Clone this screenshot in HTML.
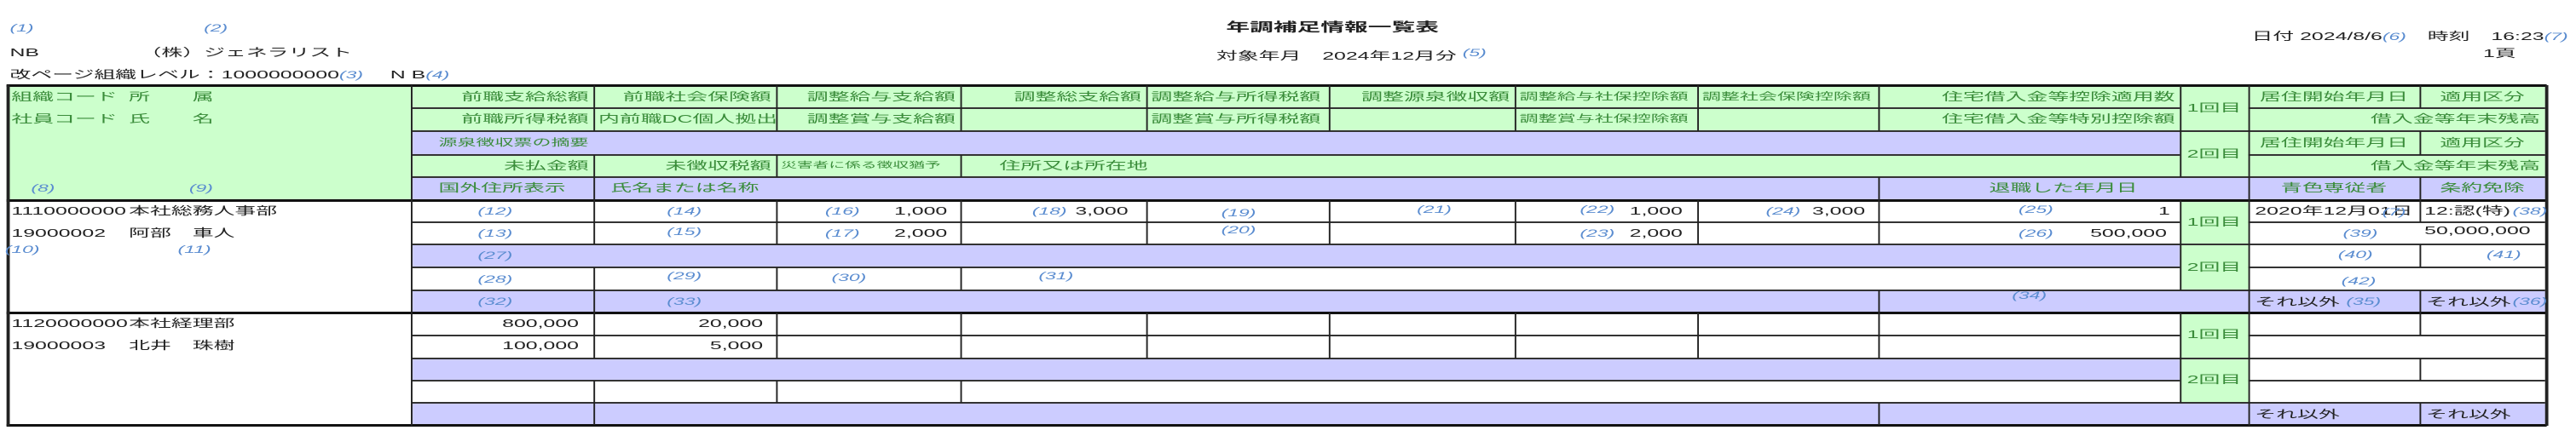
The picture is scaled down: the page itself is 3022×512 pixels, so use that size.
<!DOCTYPE html>
<html><head><meta charset="utf-8"><style>
html,body{margin:0;padding:0;background:#fff;}
body{width:3022px;height:512px;overflow:hidden;position:relative;}
.p{position:absolute;left:0;top:0;width:1580px;height:512px;transform:scaleX(1.9127);transform-origin:0 0;font-family:"Liberation Sans","Noto Sans CJK JP",sans-serif;font-size:13px;color:#222;}
.p div{position:absolute;}
.h{height:2px;background:#333;}
.H{height:3px;background:#111;}
.v{width:1px;background:#222;}
.c{height:26px;line-height:26px;white-space:nowrap;box-sizing:border-box;padding:0 3px;}
.r{text-align:right;}
.m{text-align:center;}
.g{color:#3a8c3a;}
.s{font-size:11.5px;}
.xs{font-size:9.8px;}
.b{color:#5a8cd0;font-style:italic;font-size:12px;}
.G{background:#ccffcc;}
.P{background:#ccccff;}
</style></head><body><div class="p">

<div class="c b" style="left:3px;top:20px">(1)</div>
<div class="c b" style="left:122px;top:20px">(2)</div>
<div class="c" style="left:3px;top:49px">NB</div>
<div class="c" style="left:83px;top:49px">（株）ジェネラリスト</div>
<div class="c" style="left:3px;top:75px">改ページ組織レベル：1000000000<span class="b">(3)</span>　 N B<span class="b">(4)</span></div>
<div class="c" style="left:749px;top:20px;font-size:14.5px;font-weight:bold">年調補足情報一覧表</div>
<div class="c" style="left:743px;top:49px">対象年月　2024年12月分 <span class="b" style="vertical-align:4px">(5)</span></div>
<div class="c" style="left:1378px;top:30px">日付 2024/8/6<span class="b">(6)</span>　時刻　16:23<span class="b">(7)</span></div>
<div class="c" style="left:1520px;top:50px">1頁</div>

<div class="G" style="left:4px;top:100px;width:1557px;height:135px"></div>
<div class="P" style="left:252px;top:154px;width:1085px;height:28px"></div>
<div class="P" style="left:252px;top:208px;width:1309px;height:27px"></div>
<div class="P" style="left:252px;top:287px;width:1085px;height:27px"></div>
<div class="P" style="left:252px;top:341px;width:1309px;height:26px"></div>
<div class="G" style="left:1337px;top:235px;width:42px;height:106px"></div>
<div class="P" style="left:252px;top:421px;width:1085px;height:26px"></div>
<div class="P" style="left:252px;top:473px;width:1309px;height:26px"></div>
<div class="G" style="left:1337px;top:367px;width:42px;height:106px"></div>

<div class="h" style="left:252px;top:126px;width:1085px"></div><div class="h" style="left:1379px;top:126px;width:182px"></div>
<div class="h" style="left:252px;top:181px;width:1085px"></div><div class="h" style="left:1379px;top:181px;width:182px"></div>
<div class="h" style="left:252px;top:260px;width:1085px"></div><div class="h" style="left:1379px;top:260px;width:182px"></div>
<div class="h" style="left:252px;top:313px;width:1085px"></div><div class="h" style="left:1379px;top:313px;width:182px"></div>
<div class="h" style="left:252px;top:393px;width:1085px"></div><div class="h" style="left:1379px;top:393px;width:182px"></div>
<div class="h" style="left:252px;top:446px;width:1085px"></div><div class="h" style="left:1379px;top:446px;width:182px"></div>
<div class="h" style="left:252px;top:153px;width:1309px"></div>
<div class="h" style="left:252px;top:207px;width:1309px"></div>
<div class="h" style="left:252px;top:286px;width:1309px"></div>
<div class="h" style="left:252px;top:340px;width:1309px"></div>
<div class="h" style="left:252px;top:420px;width:1309px"></div>
<div class="h" style="left:252px;top:472px;width:1309px"></div>
<div class="H" style="left:4px;top:99px;width:1558px"></div>
<div class="H" style="left:4px;top:234px;width:1558px"></div>
<div class="H" style="left:4px;top:366px;width:1558px"></div>
<div class="H" style="left:4px;top:498px;width:1558px"></div>

<div class="v" style="left:4px;top:100px;height:400px;width:2px"></div>
<div class="v" style="left:252px;top:100px;height:400px"></div>
<div class="v" style="left:1561px;top:100px;height:400px;width:2px"></div>
<div class="v" style="left:1379px;top:100px;height:400px"></div>
<div class="v" style="left:364px;top:100px;height:54px"></div>
<div class="v" style="left:364px;top:182px;height:105px"></div>
<div class="v" style="left:364px;top:314px;height:107px"></div>
<div class="v" style="left:364px;top:447px;height:52px"></div>
<div class="v" style="left:476px;top:100px;height:54px"></div><div class="v" style="left:476px;top:182px;height:26px"></div><div class="v" style="left:476px;top:235px;height:52px"></div><div class="v" style="left:476px;top:314px;height:27px"></div><div class="v" style="left:476px;top:367px;height:54px"></div><div class="v" style="left:476px;top:447px;height:26px"></div>
<div class="v" style="left:589px;top:100px;height:54px"></div><div class="v" style="left:589px;top:182px;height:26px"></div><div class="v" style="left:589px;top:235px;height:52px"></div><div class="v" style="left:589px;top:314px;height:27px"></div><div class="v" style="left:589px;top:367px;height:54px"></div><div class="v" style="left:589px;top:447px;height:26px"></div>
<div class="v" style="left:703px;top:100px;height:54px"></div><div class="v" style="left:703px;top:235px;height:52px"></div><div class="v" style="left:703px;top:367px;height:54px"></div>
<div class="v" style="left:815px;top:100px;height:54px"></div><div class="v" style="left:815px;top:235px;height:52px"></div><div class="v" style="left:815px;top:367px;height:54px"></div>
<div class="v" style="left:929px;top:100px;height:54px"></div><div class="v" style="left:929px;top:235px;height:52px"></div><div class="v" style="left:929px;top:367px;height:54px"></div>
<div class="v" style="left:1041px;top:100px;height:54px"></div><div class="v" style="left:1041px;top:235px;height:52px"></div><div class="v" style="left:1041px;top:367px;height:54px"></div>
<div class="v" style="left:1152px;top:100px;height:54px"></div><div class="v" style="left:1152px;top:208px;height:79px"></div><div class="v" style="left:1152px;top:341px;height:80px"></div><div class="v" style="left:1152px;top:473px;height:26px"></div>
<div class="v" style="left:1337px;top:100px;height:108px"></div><div class="v" style="left:1337px;top:235px;height:106px"></div><div class="v" style="left:1337px;top:367px;height:106px"></div>
<div class="v" style="left:1484px;top:100px;height:27px"></div><div class="v" style="left:1484px;top:154px;height:28px"></div><div class="v" style="left:1484px;top:208px;height:53px"></div><div class="v" style="left:1484px;top:287px;height:27px"></div><div class="v" style="left:1484px;top:341px;height:53px"></div><div class="v" style="left:1484px;top:421px;height:26px"></div><div class="v" style="left:1484px;top:473px;height:26px"></div>

<div class="c g" style="left:4px;top:101px">組織コード</div><div class="c g" style="left:76px;top:101px">所</div><div class="c g" style="left:115px;top:101px">属</div>
<div class="c g" style="left:4px;top:127px">社員コード</div><div class="c g" style="left:76px;top:127px">氏</div><div class="c g" style="left:115px;top:127px">名</div>
<div class="c b" style="left:16px;top:208px">(8)</div><div class="c b" style="left:113px;top:208px">(9)</div>

<div class="c g r" style="left:252px;top:101px;width:112px">前職支給総額</div>
<div class="c g r" style="left:364px;top:101px;width:112px">前職社会保険額</div>
<div class="c g r" style="left:476px;top:101px;width:113px">調整給与支給額</div>
<div class="c g r" style="left:589px;top:101px;width:114px">調整総支給額</div>
<div class="c g" style="left:703px;top:101px;width:112px">調整給与所得税額</div>
<div class="c g r" style="left:815px;top:101px;width:114px">調整源泉徴収額</div>
<div class="c g s" style="left:929px;top:101px;width:112px">調整給与社保控除額</div>
<div class="c g s" style="left:1041px;top:101px;width:111px">調整社会保険控除額</div>
<div class="c g r" style="left:1152px;top:101px;width:185px">住宅借入金等控除適用数</div>
<div class="c g m" style="left:1337px;top:114px;width:42px">1回目</div>
<div class="c g m" style="left:1379px;top:101px;width:105px">居住開始年月日</div>
<div class="c g m" style="left:1484px;top:101px;width:77px">適用区分</div>

<div class="c g r" style="left:252px;top:127px;width:112px">前職所得税額</div>
<div class="c g r" style="left:364px;top:127px;width:112px">内前職DC個人拠出</div>
<div class="c g r" style="left:476px;top:127px;width:113px">調整賞与支給額</div>
<div class="c g" style="left:703px;top:127px;width:112px">調整賞与所得税額</div>
<div class="c g s" style="left:929px;top:127px;width:112px">調整賞与社保控除額</div>
<div class="c g r" style="left:1152px;top:127px;width:185px">住宅借入金等特別控除額</div>
<div class="c g r" style="left:1379px;top:127px;width:182px">借入金等年末残高</div>

<div class="c g s" style="left:266px;top:155px">源泉徴収票の摘要</div>
<div class="c g m" style="left:1337px;top:168px;width:42px">2回目</div>
<div class="c g m" style="left:1379px;top:155px;width:105px">居住開始年月日</div>
<div class="c g m" style="left:1484px;top:155px;width:77px">適用区分</div>

<div class="c g r" style="left:252px;top:182px;width:112px">未払金額</div>
<div class="c g r" style="left:364px;top:182px;width:112px">未徴収税額</div>
<div class="c g xs" style="left:476px;top:182px;width:113px">災害者に係る徴収猶予</div>
<div class="c g" style="left:610px;top:182px">住所又は所在地</div>
<div class="c g r" style="left:1379px;top:182px;width:182px">借入金等年末残高</div>

<div class="c g m" style="left:252px;top:208px;width:112px">国外住所表示</div>
<div class="c g m" style="left:364px;top:208px;width:112px">氏名または名称</div>
<div class="c g m" style="left:1152px;top:208px;width:227px">退職した年月日</div>
<div class="c g m" style="left:1379px;top:208px;width:105px">青色専従者</div>
<div class="c g m" style="left:1484px;top:208px;width:77px">条約免除</div>

<div class="c" style="left:4px;top:235px">1110000000</div><div class="c" style="left:76px;top:235px">本社総務人事部</div>
<div class="c" style="left:4px;top:261px">19000002</div><div class="c" style="left:76px;top:261px">阿部　車人</div>
<div class="c b" style="left:0px;top:280px">(10)</div><div class="c b" style="left:106px;top:280px">(11)</div>

<div class="c b" style="left:290px;top:235px">(12)</div>
<div class="c b" style="left:406px;top:235px">(14)</div>
<div class="c b" style="left:503px;top:235px">(16)</div><div class="c r" style="left:476px;top:235px;width:108px">1,000</div>
<div class="c b" style="left:630px;top:235px">(18)</div><div class="c r" style="left:589px;top:235px;width:106px">3,000</div>
<div class="c b" style="left:746px;top:237px">(19)</div>
<div class="c b" style="left:866px;top:233px">(21)</div>
<div class="c b" style="left:966px;top:233px">(22)</div><div class="c r" style="left:929px;top:235px;width:106px">1,000</div>
<div class="c b" style="left:1080px;top:235px">(24)</div><div class="c r" style="left:1041px;top:235px;width:106px">3,000</div>
<div class="c b" style="left:1235px;top:233px">(25)</div><div class="c r" style="left:1152px;top:235px;width:182px">1</div>
<div class="c g m" style="left:1337px;top:248px;width:42px">1回目</div>
<div class="c" style="left:1380px;top:235px">2020年12月01日</div><div class="c b" style="left:1458px;top:236px">(7)</div>
<div class="c" style="left:1484px;top:235px">12:認(特)</div><div class="c b" style="left:1538px;top:235px">(38)</div>

<div class="c b" style="left:290px;top:261px">(13)</div>
<div class="c b" style="left:406px;top:259px">(15)</div>
<div class="c b" style="left:503px;top:261px">(17)</div><div class="c r" style="left:476px;top:261px;width:108px">2,000</div>
<div class="c b" style="left:746px;top:257px">(20)</div>
<div class="c b" style="left:966px;top:261px">(23)</div><div class="c r" style="left:929px;top:261px;width:106px">2,000</div>
<div class="c b" style="left:1235px;top:261px">(26)</div><div class="c r" style="left:1152px;top:261px;width:180px">500,000</div>
<div class="c b" style="left:1434px;top:261px">(39)</div><div class="c" style="left:1484px;top:258px">50,000,000</div>

<div class="c b" style="left:290px;top:287px">(27)</div>
<div class="c g m" style="left:1337px;top:301px;width:42px">2回目</div>
<div class="c b" style="left:1431px;top:286px">(40)</div><div class="c b" style="left:1522px;top:286px">(41)</div>

<div class="c b" style="left:290px;top:315px">(28)</div>
<div class="c b" style="left:406px;top:311px">(29)</div>
<div class="c b" style="left:507px;top:313px">(30)</div>
<div class="c b" style="left:634px;top:311px">(31)</div>
<div class="c b" style="left:1433px;top:317px">(42)</div>

<div class="c b" style="left:290px;top:341px">(32)</div>
<div class="c b" style="left:406px;top:341px">(33)</div>
<div class="c b" style="left:1231px;top:334px">(34)</div>
<div class="c" style="left:1380px;top:342px">それ以外</div><div class="c b" style="left:1436px;top:341px">(35)</div>
<div class="c" style="left:1485px;top:342px">それ以外</div><div class="c b" style="left:1538px;top:341px">(36)</div>

<div class="c" style="left:4px;top:367px">1120000000</div><div class="c" style="left:76px;top:367px">本社経理部</div>
<div class="c" style="left:4px;top:393px">19000003</div><div class="c" style="left:76px;top:393px">北井　珠樹</div>
<div class="c r" style="left:252px;top:367px;width:106px">800,000</div>
<div class="c r" style="left:364px;top:367px;width:107px">20,000</div>
<div class="c r" style="left:252px;top:393px;width:106px">100,000</div>
<div class="c r" style="left:364px;top:393px;width:107px">5,000</div>
<div class="c g m" style="left:1337px;top:380px;width:42px">1回目</div>
<div class="c g m" style="left:1337px;top:433px;width:42px">2回目</div>
<div class="c" style="left:1380px;top:474px">それ以外</div>
<div class="c" style="left:1485px;top:474px">それ以外</div>

</div></body></html>
